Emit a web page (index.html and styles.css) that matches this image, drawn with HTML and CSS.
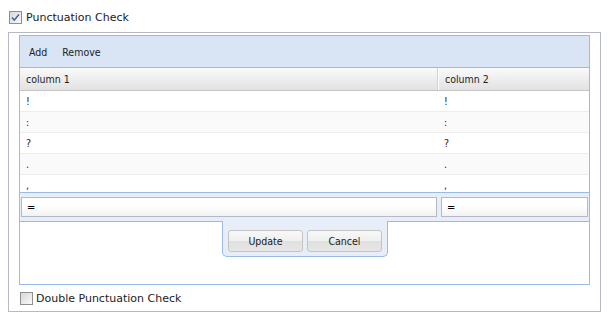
FILE: index.html
```html
<!DOCTYPE html>
<html lang="en">
<head>
    <meta charset="UTF-8">
    <title>Punctuation Check</title>
    <link rel="stylesheet" href="styles.css">
</head>
<body>
    <div class="check-row top">
        <span class="checkbox">
            <svg width="13" height="13" viewBox="0 0 13 13">
                <defs>
                    <linearGradient id="cbg" x1="0" y1="0" x2="1" y2="1">
                        <stop offset="0" stop-color="#d6d6d6"/>
                        <stop offset="1" stop-color="#fbfbfb"/>
                    </linearGradient>
                </defs>
                <rect x="0.5" y="0.5" width="12" height="12" fill="url(#cbg)" stroke="#8f8f8f"/>
                <path d="M3 6.6 L5.3 9.2 L10 3.4" fill="none" stroke="#3a5ca8" stroke-width="1.5"/>
            </svg>
        </span>
        <label>Punctuation Check</label>
    </div>

    <div class="panel">
        <div class="grid">
            <div class="toolbar">
                <span class="tb-btn">Add</span>
                <span class="tb-btn">Remove</span>
            </div>
            <div class="grid-header">
                <div class="cell col-1">column 1</div>
                <div class="cell col-2">column 2</div>
            </div>
            <div class="grid-body">
                <div class="rows">
                    <div class="row"><div class="cell col-1">!</div><div class="cell col-2">!</div></div>
                    <div class="row alt"><div class="cell col-1">:</div><div class="cell col-2">:</div></div>
                    <div class="row"><div class="cell col-1">?</div><div class="cell col-2">?</div></div>
                    <div class="row alt"><div class="cell col-1">.</div><div class="cell col-2">.</div></div>
                    <div class="row"><div class="cell col-1">,</div><div class="cell col-2">,</div></div>
                </div>
                <div class="editor">
                    <input type="text" class="field field-1" value="=">
                    <input type="text" class="field field-2" value="=">
                    <div class="editor-buttons">
                        <button type="button">Update</button>
                        <button type="button">Cancel</button>
                    </div>
                </div>
            </div>
        </div>

        <div class="check-row bottom">
            <span class="checkbox">
                <svg width="13" height="13" viewBox="0 0 13 13">
                    <defs>
                        <linearGradient id="cbg2" x1="0" y1="0" x2="1" y2="1">
                            <stop offset="0" stop-color="#d6d6d6"/>
                            <stop offset="1" stop-color="#fbfbfb"/>
                        </linearGradient>
                    </defs>
                    <rect x="0.5" y="0.5" width="12" height="12" fill="url(#cbg2)" stroke="#8f8f8f"/>
                </svg>
            </span>
            <label>Double Punctuation Check</label>
        </div>
    </div>
</body>
</html>
```

FILE: styles.css
```css
body {
    margin: 0;
    padding: 0;
    background-color: #fff;
    font-family: 'DejaVu Sans', sans-serif;
    font-size: 11px;
    color: #222;
}

.check-row {
    display: flex;
    align-items: center;
    gap: 4px;
    height: 13px;
}

.check-row.top {
    padding: 11px 0 8px 9px;
}

.check-row.bottom {
    margin: 7px 0 0 1px;
    gap: 3px;
}

.checkbox {
    display: block;
    width: 13px;
    height: 13px;
}

.checkbox svg {
    display: block;
}

.panel {
    margin: 0 10px 0 8px;
    height: 280px;
    box-sizing: border-box;
    border: 1px solid #b5b8c8;
    padding: 2px 10px 0 10px;
}

.grid {
    height: 250px;
    box-sizing: border-box;
    border: 1px solid #99bbe8;
    display: flex;
    flex-direction: column;
    font-family: 'DejaVu Sans Condensed', 'DejaVu Sans', sans-serif;
    font-stretch: condensed;
    font-size: 10.5px;
}

.toolbar {
    height: 31px;
    background-color: #d9e5f4;
    border-bottom: 1px solid #99bbe8;
    display: flex;
    align-items: center;
    gap: 15px;
    padding-left: 9px;
}

.grid-header {
    display: flex;
    height: 22px;
    background: linear-gradient(#fafafa, #ebebeb 60%, #e2e2e2);
    border-bottom: 1px solid #c5c5c5;
}

.cell {
    display: flex;
    align-items: center;
    padding-left: 6px;
    box-sizing: border-box;
}

.col-1 {
    width: 418px;
}

.col-2 {
    flex: 1;
}

.grid-header .col-1 {
    border-right: 1px solid #d0d0d0;
}

.grid-header .col-2 {
    border-left: 1px solid #fff;
}

.grid-body {
    flex: 1;
    background-color: #fff;
}

.rows {
    height: 101px;
    overflow: hidden;
}

.row {
    display: flex;
    height: 20px;
    border-bottom: 1px solid #ededed;
}

.row.alt {
    background-color: #fafafa;
}

.editor {
    position: relative;
    display: flex;
    gap: 4px;
    height: 24px;
    padding: 4px 1px 0 1px;
    background-color: #e8eef8;
    border-top: 1px solid #99bbe8;
    border-bottom: 1px solid #99bbe8;
}

.field {
    height: 20px;
    box-sizing: border-box;
    margin: 0;
    border: 1px solid #b5b8c8;
    padding: 0 5px;
    background: linear-gradient(#ffffff, #ffffff 40%, #f2f2f2);
    font-family: inherit;
    font-size: 11px;
    color: #000;
    outline: none;
}

.field-1 {
    width: 416px;
}

.field-2 {
    width: 147px;
}

.editor-buttons {
    position: absolute;
    top: 100%;
    left: 202px;
    width: 166px;
    height: 36px;
    box-sizing: border-box;
    padding: 9px 0 0 5px;
    display: flex;
    gap: 4px;
    align-items: flex-start;
    background-color: #e8eef8;
    border: 1px solid #99bbe8;
    border-top: none;
    border-radius: 0 0 5px 5px;
}

button {
    width: 75px;
    height: 22px;
    padding: 0;
    border: 1px solid #c4c4c4;
    border-radius: 3px;
    background: linear-gradient(#f8f8f8, #efefef 50%, #e0e0e0 51%, #e6e6e6);
    font-family: 'DejaVu Sans Condensed', 'DejaVu Sans', sans-serif;
    font-stretch: condensed;
    font-size: 10.5px;
    color: #222;
    cursor: pointer;
}
```
